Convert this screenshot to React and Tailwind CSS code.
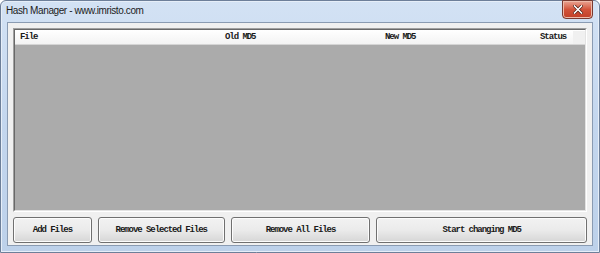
export default function App() {
  const mono = { fontFamily: '"Liberation Mono", "DejaVu Sans Mono", monospace' };
  const Btn = ({ w, children }) => (
    <div
      className={`${w} h-[26px] pt-[1px] flex items-center justify-center rounded-[3px] border border-[#707070] bg-gradient-to-b from-[#f2f2f2] via-[#ebebeb] to-[#d6d6d6] text-[9px] font-bold tracking-[-1.05px] text-[#1a1a1a] shadow-[inset_0_0_0_1px_#fcfcfc]`}
      style={mono}
    >
      {children}
    </div>
  );
  return (
    <div className="w-[600px] h-[253px] bg-white">
      <div className="w-[600px] h-[253px] flex flex-col rounded-t-[6px] border border-[#6d7f99] bg-gradient-to-b from-[#d3e2f4] via-[#c3d6ee] to-[#bdd1ea] shadow-[inset_0_0_0_1px_#e6eef8]">
        <div className="h-[21px] shrink-0 flex items-start justify-between relative">
          <div
            className="pl-[5px] pt-[4px] text-[10px] tracking-[-0.4px] text-[#1c1c1c] leading-[12px]"
            style={{ fontFamily: '"Liberation Sans", "Noto Sans", sans-serif' }}
          >
            Hash Manager - www.imristo.com
          </div>
          <div className="mr-[6px] mt-[-1px] w-[31px] h-[19px] rounded-b-[4px] border border-[#7a3a30] bg-gradient-to-b from-[#e8a493] via-[#d2533a] to-[#c13f27] flex items-center justify-center shadow-[inset_0_0_0_1px_#eebbaa]">
            <svg width="10" height="9" viewBox="0 0 10 9">
              <path d="M1.5 1 L8.5 8 M8.5 1 L1.5 8" stroke="#4a1a10" strokeWidth="3" strokeLinecap="square" />
              <path d="M1.5 1 L8.5 8 M8.5 1 L1.5 8" stroke="#ffffff" strokeWidth="1.6" strokeLinecap="square" />
            </svg>
          </div>
        </div>
        <div className="mx-[6px] mb-[6px] h-[224px] shrink-0 flex flex-col border border-[#8a9bb2] bg-[#f0f0f0] px-[5px] pt-[5px] pb-[2px]">
          <div className="h-[184px] shrink-0 flex flex-col border border-[#a0a0a0] border-r-white border-b-white">
            <div className="flex-1 flex flex-col border border-[#696969] border-r-[#e3e3e3] border-b-[#e3e3e3] bg-[#ababab]">
              <div
                className="h-[15px] pt-[1px] flex items-center bg-gradient-to-b from-white to-[#f3f3f3] border-b border-[#d5d5d5] text-[9px] font-bold tracking-[-1.05px] text-[#1a1a1a]"
                style={mono}
              >
                <div className="w-[210px] pl-[5px]">File</div>
                <div className="w-[160px]">Old MD5</div>
                <div className="w-[155px]">New MD5</div>
                <div className="flex-1">Status</div>
                <div className="w-[12px] h-full bg-[#f0f0f0]"></div>
              </div>
            </div>
          </div>
          <div className="mt-[5px] shrink-0 flex gap-[6px]">
            <Btn w="w-[79px]">Add Files</Btn>
            <Btn w="w-[127px]">Remove Selected Files</Btn>
            <Btn w="w-[140px]">Remove All Files</Btn>
            <Btn w="w-[211px]">Start changing MD5</Btn>
          </div>
        </div>
      </div>
    </div>
  );
}
